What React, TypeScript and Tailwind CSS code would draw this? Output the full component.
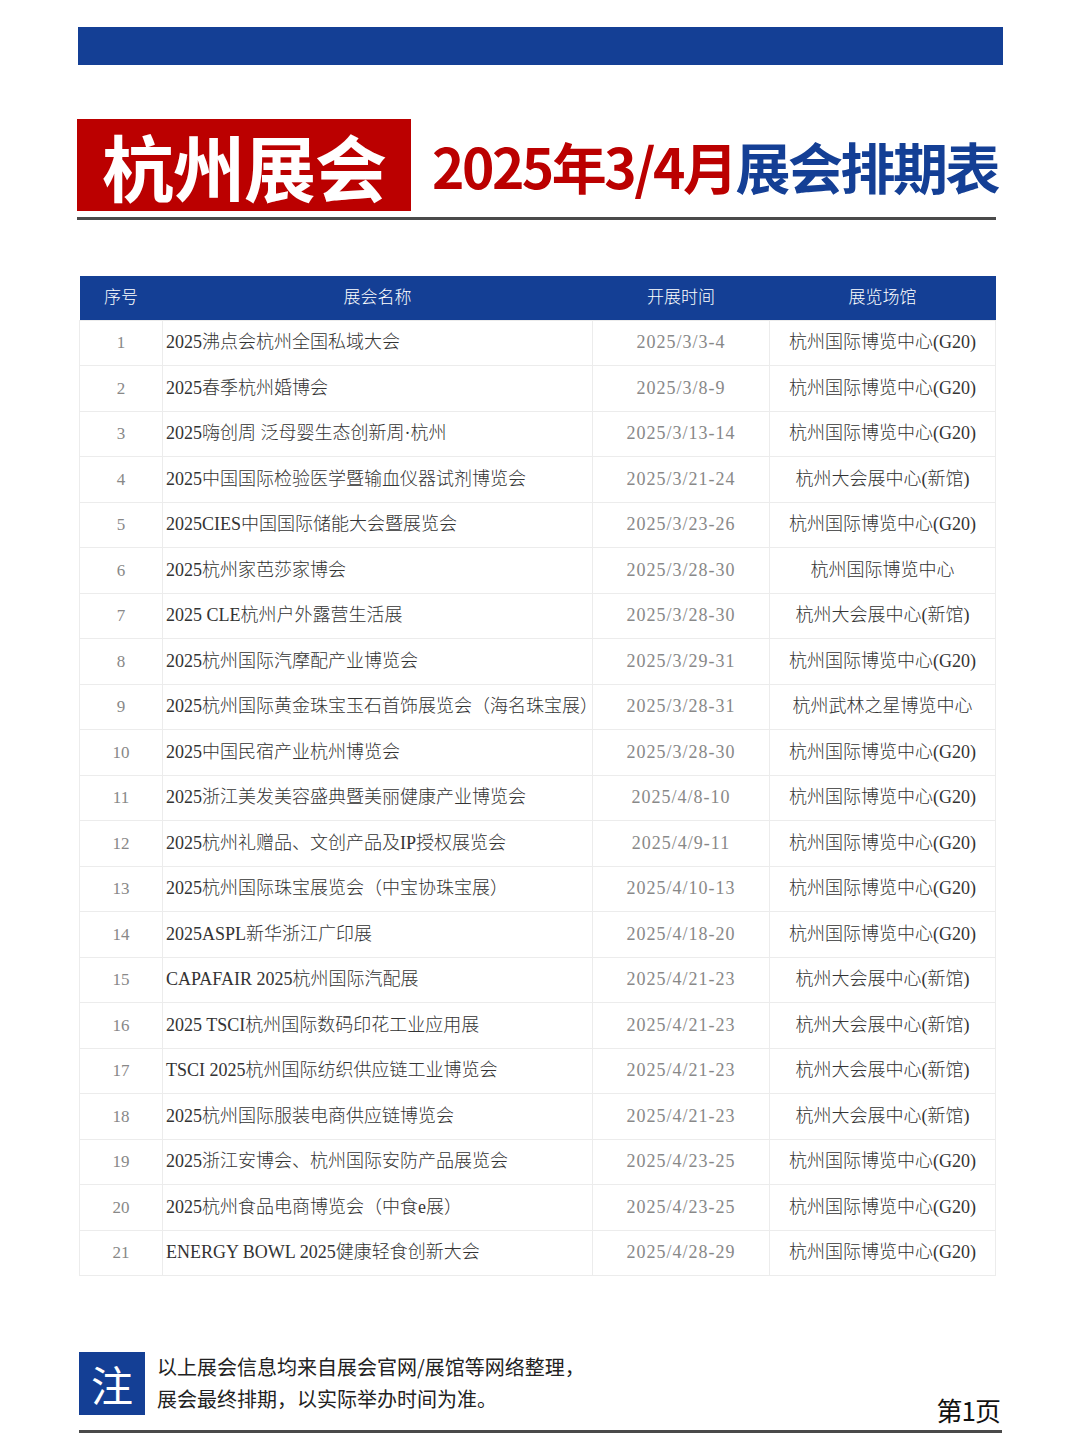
import React from 'react';

const rows = [
  ['1', '2025沸点会杭州全国私域大会', '2025/3/3-4', '杭州国际博览中心(G20)'],
  ['2', '2025春季杭州婚博会', '2025/3/8-9', '杭州国际博览中心(G20)'],
  ['3', '2025嗨创周 泛母婴生态创新周·杭州', '2025/3/13-14', '杭州国际博览中心(G20)'],
  ['4', '2025中国国际检验医学暨输血仪器试剂博览会', '2025/3/21-24', '杭州大会展中心(新馆)'],
  ['5', '2025CIES中国国际储能大会暨展览会', '2025/3/23-26', '杭州国际博览中心(G20)'],
  ['6', '2025杭州家芭莎家博会', '2025/3/28-30', '杭州国际博览中心'],
  ['7', '2025 CLE杭州户外露营生活展', '2025/3/28-30', '杭州大会展中心(新馆)'],
  ['8', '2025杭州国际汽摩配产业博览会', '2025/3/29-31', '杭州国际博览中心(G20)'],
  ['9', '2025杭州国际黄金珠宝玉石首饰展览会（海名珠宝展）', '2025/3/28-31', '杭州武林之星博览中心'],
  ['10', '2025中国民宿产业杭州博览会', '2025/3/28-30', '杭州国际博览中心(G20)'],
  ['11', '2025浙江美发美容盛典暨美丽健康产业博览会', '2025/4/8-10', '杭州国际博览中心(G20)'],
  ['12', '2025杭州礼赠品、文创产品及IP授权展览会', '2025/4/9-11', '杭州国际博览中心(G20)'],
  ['13', '2025杭州国际珠宝展览会（中宝协珠宝展）', '2025/4/10-13', '杭州国际博览中心(G20)'],
  ['14', '2025ASPL新华浙江广印展', '2025/4/18-20', '杭州国际博览中心(G20)'],
  ['15', 'CAPAFAIR 2025杭州国际汽配展', '2025/4/21-23', '杭州大会展中心(新馆)'],
  ['16', '2025 TSCI杭州国际数码印花工业应用展', '2025/4/21-23', '杭州大会展中心(新馆)'],
  ['17', 'TSCI 2025杭州国际纺织供应链工业博览会', '2025/4/21-23', '杭州大会展中心(新馆)'],
  ['18', '2025杭州国际服装电商供应链博览会', '2025/4/21-23', '杭州大会展中心(新馆)'],
  ['19', '2025浙江安博会、杭州国际安防产品展览会', '2025/4/23-25', '杭州国际博览中心(G20)'],
  ['20', '2025杭州食品电商博览会（中食e展）', '2025/4/23-25', '杭州国际博览中心(G20)'],
  ['21', 'ENERGY BOWL 2025健康轻食创新大会', '2025/4/28-29', '杭州国际博览中心(G20)'],
];

const serif = 'font-["Liberation_Serif","Noto_Sans_CJK_SC",serif]';

export default function App() {
  return (
    <div className="w-[1080px] h-[1439px] bg-white font-['Noto_Sans_CJK_SC',sans-serif] pt-[27px]">
      {/* top bar */}
      <div className="ml-[78px] w-[925px] h-[38px] bg-[#143f95]" />

      {/* title */}
      <div className="ml-[77px] w-[919px] mt-[54px]">
        <div className="flex items-center whitespace-nowrap">
          <div className="w-[334px] h-[92px] shrink-0 bg-[#bb0000] flex items-center justify-center">
            <span className="text-white font-bold text-[72px] leading-none tracking-[-1px]">杭州展会</span>
          </div>
          <div className="ml-[21px] shrink-0 flex items-center font-bold text-[55px] leading-none tracking-[-2.5px]">
            <span className="text-[#bb0000]">2025年3/4月</span>
            <span className="text-[#143f95]">展会排期表</span>
          </div>
        </div>
        <div className="mt-[6px] h-[3px] bg-[#4a4a4a]" />
      </div>

      {/* table */}
      <table className={`ml-[79px] mt-[56px] w-[916px] border-collapse table-fixed ${serif} font-light text-[18px]`}>
        <colgroup>
          <col className="w-[83px]" />
          <col className="w-[430px]" />
          <col className="w-[177px]" />
          <col className="w-[226px]" />
        </colgroup>
        <thead>
          <tr className="h-[44px] bg-[#143f95] text-white text-[17px]">
            <th className="font-light">序号</th>
            <th className="font-light">展会名称</th>
            <th className="font-light">开展时间</th>
            <th className="font-light">展览场馆</th>
          </tr>
        </thead>
        <tbody>
          {rows.map((r) => (
            <tr key={r[0]} className="h-[45.5px]">
              <td className="border border-[#ececec] text-center text-[#888] text-[17px]">{r[0]}</td>
              <td className="border border-[#ececec] pl-[3px] text-[#333] whitespace-nowrap">{r[1]}</td>
              <td className="border border-[#ececec] text-center text-[#888] tracking-[1px]">{r[2]}</td>
              <td className="border border-[#ececec] text-center text-[#333] whitespace-nowrap">{r[3]}</td>
            </tr>
          ))}
        </tbody>
      </table>

      {/* footer note */}
      <div className="ml-[79px] w-[923px] mt-[75px]">
        <div className="flex items-end">
          <div className="w-[66px] h-[63px] bg-[#143f95] flex items-center justify-center shrink-0">
            <span className="text-white text-[42px] leading-none">注</span>
          </div>
          <div className="ml-[12px] flex-1 text-[20px] leading-[32px] text-[#222] self-center">
            <p>以上展会信息均来自展会官网/展馆等网络整理，</p>
            <p>展会最终排期，以实际举办时间为准。</p>
          </div>
          <div className="text-[26px] leading-none text-[#111] mb-[-8px] mr-[2px] tracking-[-1px]">第1页</div>
        </div>
        <div className="mt-[15px] h-[3px] bg-[#4a4a4a]" />
      </div>
    </div>
  );
}
